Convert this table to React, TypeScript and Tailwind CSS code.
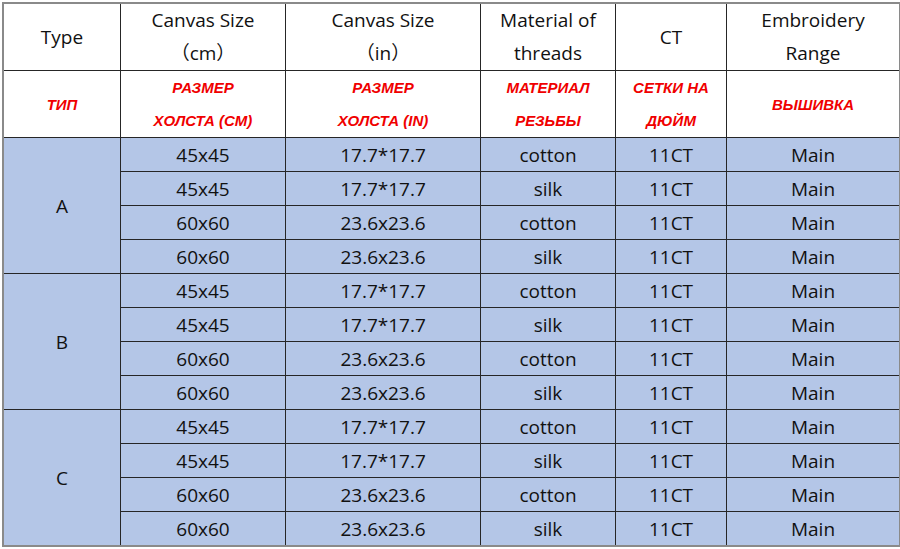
const rows = [
  { size: "45x45", inch: "17.7*17.7", mat: "cotton" },
  { size: "45x45", inch: "17.7*17.7", mat: "silk" },
  { size: "60x60", inch: "23.6x23.6", mat: "cotton" },
  { size: "60x60", inch: "23.6x23.6", mat: "silk" },
];

const groups = ["A", "B", "C"];

const cell = "border border-[#262626] text-center align-middle p-0";
const red = "text-[#f00000] font-bold italic text-[15px] leading-[33px] [font-family:'Liberation_Sans',Arial,sans-serif]";

export default function App() {
  return (
    <div className="w-[900px] h-[549px] bg-white pt-[3px] pl-[3px] [font-family:'Open_Sans','Noto_Sans_CJK_SC',sans-serif] text-[#111]">
      <table className="table-fixed border-collapse w-[896px] outline-2 outline-[#8a8a8a] -outline-offset-1">
        <colgroup>
          <col className="w-[117px]" />
          <col className="w-[165px]" />
          <col className="w-[195px]" />
          <col className="w-[135px]" />
          <col className="w-[111px]" />
          <col className="w-[173px]" />
        </colgroup>
        <tbody>
          <tr className="h-[67px] text-[19px] leading-[33px]">
            <td className={cell}>Type</td>
            <td className={cell}>Canvas Size<br />（cm）</td>
            <td className={cell}>Canvas Size<br />（in）</td>
            <td className={cell}>Material of<br />threads</td>
            <td className={cell}>CT</td>
            <td className={cell}>Embroidery<br />Range</td>
          </tr>
          <tr className="h-[66px]">
            <td className={cell}><span className={red}>ТИП</span></td>
            <td className={cell}><div className={red}>РАЗМЕР<br />ХОЛСТА (СМ)</div></td>
            <td className={cell}><div className={red}>РАЗМЕР<br />ХОЛСТА (IN)</div></td>
            <td className={cell}><div className={red}>МАТЕРИАЛ<br />РЕЗЬБЫ</div></td>
            <td className={cell}><div className={red}>СЕТКИ НА<br />ДЮЙМ</div></td>
            <td className={cell}><div className={red}>ВЫШИВКА</div></td>
          </tr>
          {groups.map((g) =>
            rows.map((r, i) => (
              <tr key={g + i} className="h-[34px] bg-[#b4c6e7] text-[19px] leading-[24px]">
                {i === 0 && (
                  <td rowSpan={4} className={cell}>{g}</td>
                )}
                <td className={cell}>{r.size}</td>
                <td className={cell}>{r.inch}</td>
                <td className={cell}>{r.mat}</td>
                <td className={cell}>11CT</td>
                <td className={cell}>Main</td>
              </tr>
            ))
          )}
        </tbody>
      </table>
    </div>
  );
}
